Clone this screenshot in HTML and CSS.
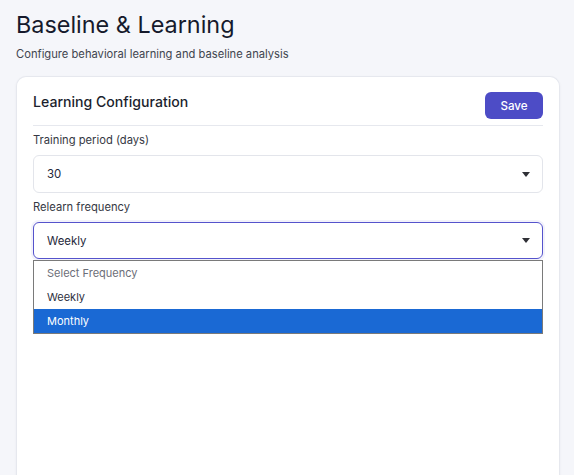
FILE: index.html
```html
<!DOCTYPE html>
<html lang="en">
<head>
    <meta charset="UTF-8">
    <meta name="viewport" content="width=device-width, initial-scale=1.0">
    <title>Baseline &amp; Learning</title>
    <link rel="stylesheet" href="styles.css">
</head>
<body>
    <header class="page-header">
        <h1>Baseline &amp; Learning</h1>
        <p>Configure behavioral learning and baseline analysis</p>
    </header>

    <section class="card">
        <div class="card-header">
            <h2>Learning Configuration</h2>
            <button class="btn-save" type="button">Save</button>
        </div>

        <div class="field">
            <label>Training period (days)</label>
            <div class="select">
                <span>30</span>
                <span class="caret"></span>
            </div>
        </div>

        <div class="field">
            <label>Relearn frequency</label>
            <div class="select-wrap">
                <div class="select focused">
                    <span>Weekly</span>
                    <span class="caret"></span>
                </div>
                <ul class="dropdown">
                    <li class="placeholder">Select Frequency</li>
                    <li>Weekly</li>
                    <li class="active">Monthly</li>
                </ul>
            </div>
        </div>
    </section>
</body>
</html>
```

FILE: styles.css
```css
body {
    font-family: Inter, "Noto Sans", Arial, sans-serif;
    margin: 0;
    padding: 9px 14px 0 16px;
    background-color: #f5f6fa;
    color: #1c1f2e;
    height: 466px;
    overflow: hidden;
    display: flex;
    flex-direction: column;
}
.page-header h1 {
    margin: 0;
    font-size: 23.4px;
    font-weight: 400;
    line-height: 31px;
    color: #161a2c;
}
.page-header p {
    margin: 6px 0 0;
    font-size: 11.2px;
    line-height: 16px;
    color: #41454f;
}
.card {
    margin-top: 14px;
    flex: 1;
    background: #fff;
    border: 1px solid #e6e8ee;
    border-bottom: none;
    border-radius: 10px 10px 0 0;
    padding: 15px 16px 0;
    box-shadow: 0 1px 3px rgba(20, 20, 60, 0.05);
}
.card-header {
    display: flex;
    justify-content: space-between;
    align-items: flex-start;
    padding-bottom: 6px;
    border-bottom: 1px solid #e6e8ee;
}
.card-header h2 {
    margin: 0;
    font-size: 14.1px;
    font-weight: 500;
    line-height: 20px;
    color: #1c1f2e;
}
.btn-save {
    font-family: inherit;
    font-size: 11.6px;
    font-weight: 500;
    color: #fff;
    background: #4d4cc6;
    border: none;
    border-radius: 6px;
    width: 58px;
    height: 27px;
    padding: 0;
    cursor: pointer;
}
.field {
    margin-top: 5px;
}
.field label {
    display: block;
    font-size: 11.2px;
    line-height: 19px;
    color: #363944;
    margin-bottom: 5px;
}
.select-wrap {
    position: relative;
}
.select {
    display: flex;
    justify-content: space-between;
    align-items: center;
    height: 38px;
    box-sizing: border-box;
    padding: 0 12px 0 13px;
    border: 1px solid #e3e5eb;
    border-radius: 6px;
    font-size: 11.4px;
    color: #25283a;
}
.select.focused {
    height: 37px;
    margin-top: 1px;
    border-color: #5553cc;
    box-shadow: 0 0 0 2px rgba(85, 83, 204, 0.08);
}
.caret {
    width: 0;
    height: 0;
    border-left: 4.5px solid transparent;
    border-right: 4.5px solid transparent;
    border-top: 5px solid #2f3036;
}
.dropdown {
    position: absolute;
    top: calc(100% + 1px);
    left: 0;
    right: 0;
    margin: 0;
    padding: 0;
    list-style: none;
    background: #fff;
    border: 1px solid #7a7a7a;
}
.dropdown li {
    height: 24px;
    line-height: 25px;
    padding: 0 13px;
    font-size: 11px;
    color: #2e3040;
}
.dropdown li.placeholder {
    color: #6c6e78;
}
.dropdown li.active {
    background: #1a69d4;
    color: #fff;
}
```
